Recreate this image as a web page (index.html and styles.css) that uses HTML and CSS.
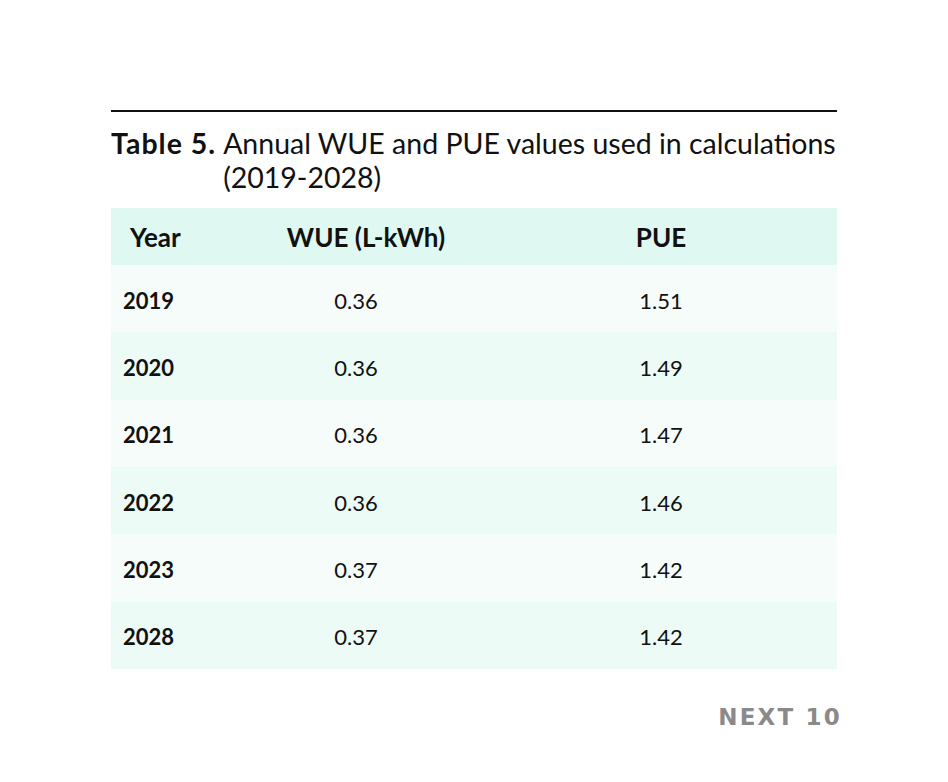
FILE: index.html
```html
<!DOCTYPE html>
<html>
<head>
<meta charset="utf-8">
<link rel="stylesheet" href="styles.css">
</head>
<body>
<div class="page">
  <div class="figure">
    <div class="rule"></div>
    <div class="caption">
      <span class="label">Table 5.</span>
      <span class="text">Annual WUE and PUE values used in calculations (2019-2028)</span>
    </div>
    <div class="table">
      <div class="row head">
        <div class="c1">Year</div>
        <div class="c2">WUE (L-kWh)</div>
        <div class="c3">PUE</div>
      </div>
      <div class="row odd"><div class="c1">2019</div><div class="c2">0.36</div><div class="c3">1.51</div></div>
      <div class="row even"><div class="c1">2020</div><div class="c2">0.36</div><div class="c3">1.49</div></div>
      <div class="row odd"><div class="c1">2021</div><div class="c2">0.36</div><div class="c3">1.47</div></div>
      <div class="row even"><div class="c1">2022</div><div class="c2">0.36</div><div class="c3">1.46</div></div>
      <div class="row odd"><div class="c1">2023</div><div class="c2">0.37</div><div class="c3">1.42</div></div>
      <div class="row even"><div class="c1">2028</div><div class="c2">0.37</div><div class="c3">1.42</div></div>
    </div>
  </div>
  <div class="brand">NEXT 10</div>
</div>
</body>
</html>
```
FILE: styles.css
```css
html, body {
  margin: 0;
  padding: 0;
  background: #ffffff;
}
.page {
  width: 948px;
  height: 782px;
  padding-top: 110px;
  box-sizing: border-box;
  font-family: "Lato", "Liberation Sans", sans-serif;
  color: #111111;
}
.figure {
  margin-left: 111px;
  width: 726px;
}
.rule {
  height: 2px;
  background: #111111;
}
.caption {
  display: flex;
  margin-top: 14px;
  font-size: 28.5px;
  line-height: 34px;
}
.label {
  font-weight: 700;
  white-space: nowrap;
  letter-spacing: 1px;
  margin-right: 7px;
}
.text {
  font-weight: 400;
}
.table {
  margin-top: 14px;
}
.row {
  display: grid;
  grid-template-columns: 125px 260px 330px 1fr;
  align-items: center;
  font-size: 22px;
}
.head {
  height: 57px;
  background: #dff8f1;
  font-weight: 700;
  font-size: 26px;
}
.odd, .even {
  height: 67.33px;
}
.odd > div, .even > div { padding-top: 3px; }
.odd { background: #f6fcfa; }
.even { background: #ecfbf6; }
.c1 { padding-left: 12px; font-weight: 700; }
.head .c1 { padding-left: 19px; }
.c2, .c3 { text-align: center; }
.odd .c2, .even .c2 { padding-right: 20px; }
.brand {
  margin-top: 35px;
  width: 842px;
  text-align: right;
  font-family: "DejaVu Sans", sans-serif;
  font-weight: 700;
  font-size: 23px;
  letter-spacing: 2.2px;
  color: #8a8a8a;
}
```
